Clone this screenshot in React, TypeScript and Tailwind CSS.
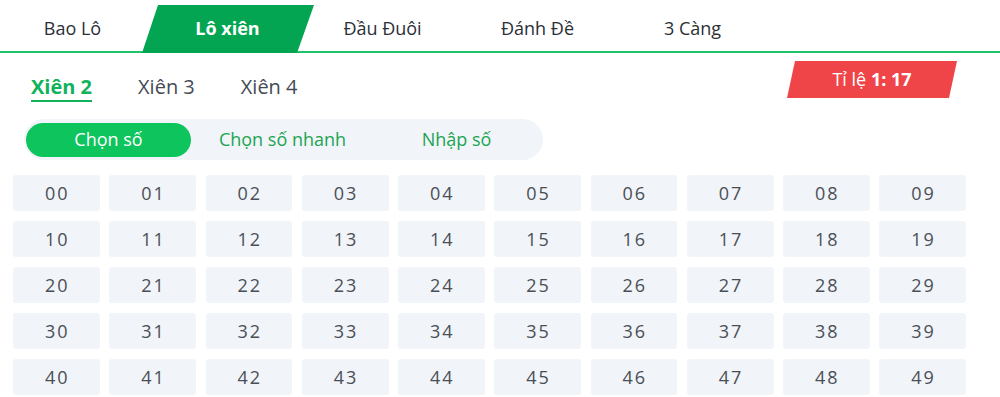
import React, { useState } from 'react';

const mainTabs = ['Bao Lô', 'Lô xiên', 'Đầu Đuôi', 'Đánh Đề', '3 Càng'];
const subTabs = ['Xiên 2', 'Xiên 3', 'Xiên 4'];
const modes = ['Chọn số', 'Chọn số nhanh', 'Nhập số'];

function App() {
  const [tab, setTab] = useState(1);
  const [sub, setSub] = useState(0);
  const [mode, setMode] = useState(0);
  const [picked, setPicked] = useState<number[]>([]);

  const numbers = Array.from({ length: 100 }, (_, i) => i);

  const toggle = (n: number) => {
    setPicked((p) => (p.includes(n) ? p.filter((x) => x !== n) : [...p, n]));
  };

  return (
    <div className="min-h-screen bg-white font-['Open_Sans',sans-serif] overflow-hidden">
      {/* main tabs */}
      <div className="flex h-[53px] border-b-2 border-[#1fc46a]">
        <div className="flex ml-[-5px]">
          {mainTabs.map((t, i) => (
            <button
              key={t}
              onClick={() => setTab(i)}
              className={`relative w-[155px] h-full flex items-center justify-center pt-[5px] text-[18px] ${
                tab === i ? 'text-white font-bold' : 'text-[#2b2f36]'
              }`}
            >
              {tab === i && (
                <span className="absolute top-[5px] bottom-[-2px] -left-[8px] -right-[9px] bg-[#03a552] [clip-path:polygon(16px_0,100%_0,calc(100%-17px)_100%,0_100%)]" />
              )}
              <span className="relative">{t}</span>
            </button>
          ))}
        </div>
      </div>

      {/* sub tabs + rate */}
      <div className="flex items-start justify-between pl-[31px] pr-[43px] pt-[8px]">
        <div className="flex gap-[46px] pt-[14px]">
          {subTabs.map((s, i) => (
            <button
              key={s}
              onClick={() => setSub(i)}
              className={`relative text-[20px] leading-[24px] pb-[3px] ${
                sub === i ? 'text-[#10b25a] font-bold' : 'text-[#454b55]'
              }`}
            >
              {s}
              {sub === i && <span className="absolute left-0 right-0 bottom-0 h-[2px] bg-[#10b25a]" />}
            </button>
          ))}
        </div>
        <div className="w-[170px] h-[37px] flex items-center justify-center bg-[#ef4549] text-white text-[18px] [clip-path:polygon(8px_0,100%_0,calc(100%-8px)_100%,0_100%)]">
          <span>
            Tỉ lệ <b className="font-bold">1: 17</b>
          </span>
        </div>
      </div>

      {/* mode switch */}
      <div className="pl-[24px] pt-[17px]">
        <div className="inline-flex gap-[9px] rounded-full bg-[#f1f4f8] pl-[2px] pr-[4px] py-[3.5px]">
          {modes.map((m, i) => (
            <button
              key={m}
              onClick={() => setMode(i)}
              className={`w-[165px] h-[34px] rounded-full text-[18px] flex items-center justify-center ${
                mode === i ? 'bg-[#0ec45d] text-white' : 'text-[#1ba552]'
              }`}
            >
              {m}
            </button>
          ))}
        </div>
      </div>

      {/* numbers */}
      <div className="grid grid-cols-10 gap-x-[9.5px] gap-y-[10px] pl-[13px] pr-[34px] pt-[15px]">
        {numbers.map((n) => {
          const on = picked.includes(n);
          return (
            <button
              key={n}
              onClick={() => toggle(n)}
              className={`h-[36px] rounded-[3px] flex items-center justify-center text-[18px] tracking-[2px] ${
                on ? 'bg-[#0ec45d] text-white' : 'bg-[#f1f4f8] text-[#4a4f57]'
              }`}
            >
              <span className="pl-[2px]">{String(n).padStart(2, '0')}</span>
            </button>
          );
        })}
      </div>
    </div>
  );
}

export default App;
